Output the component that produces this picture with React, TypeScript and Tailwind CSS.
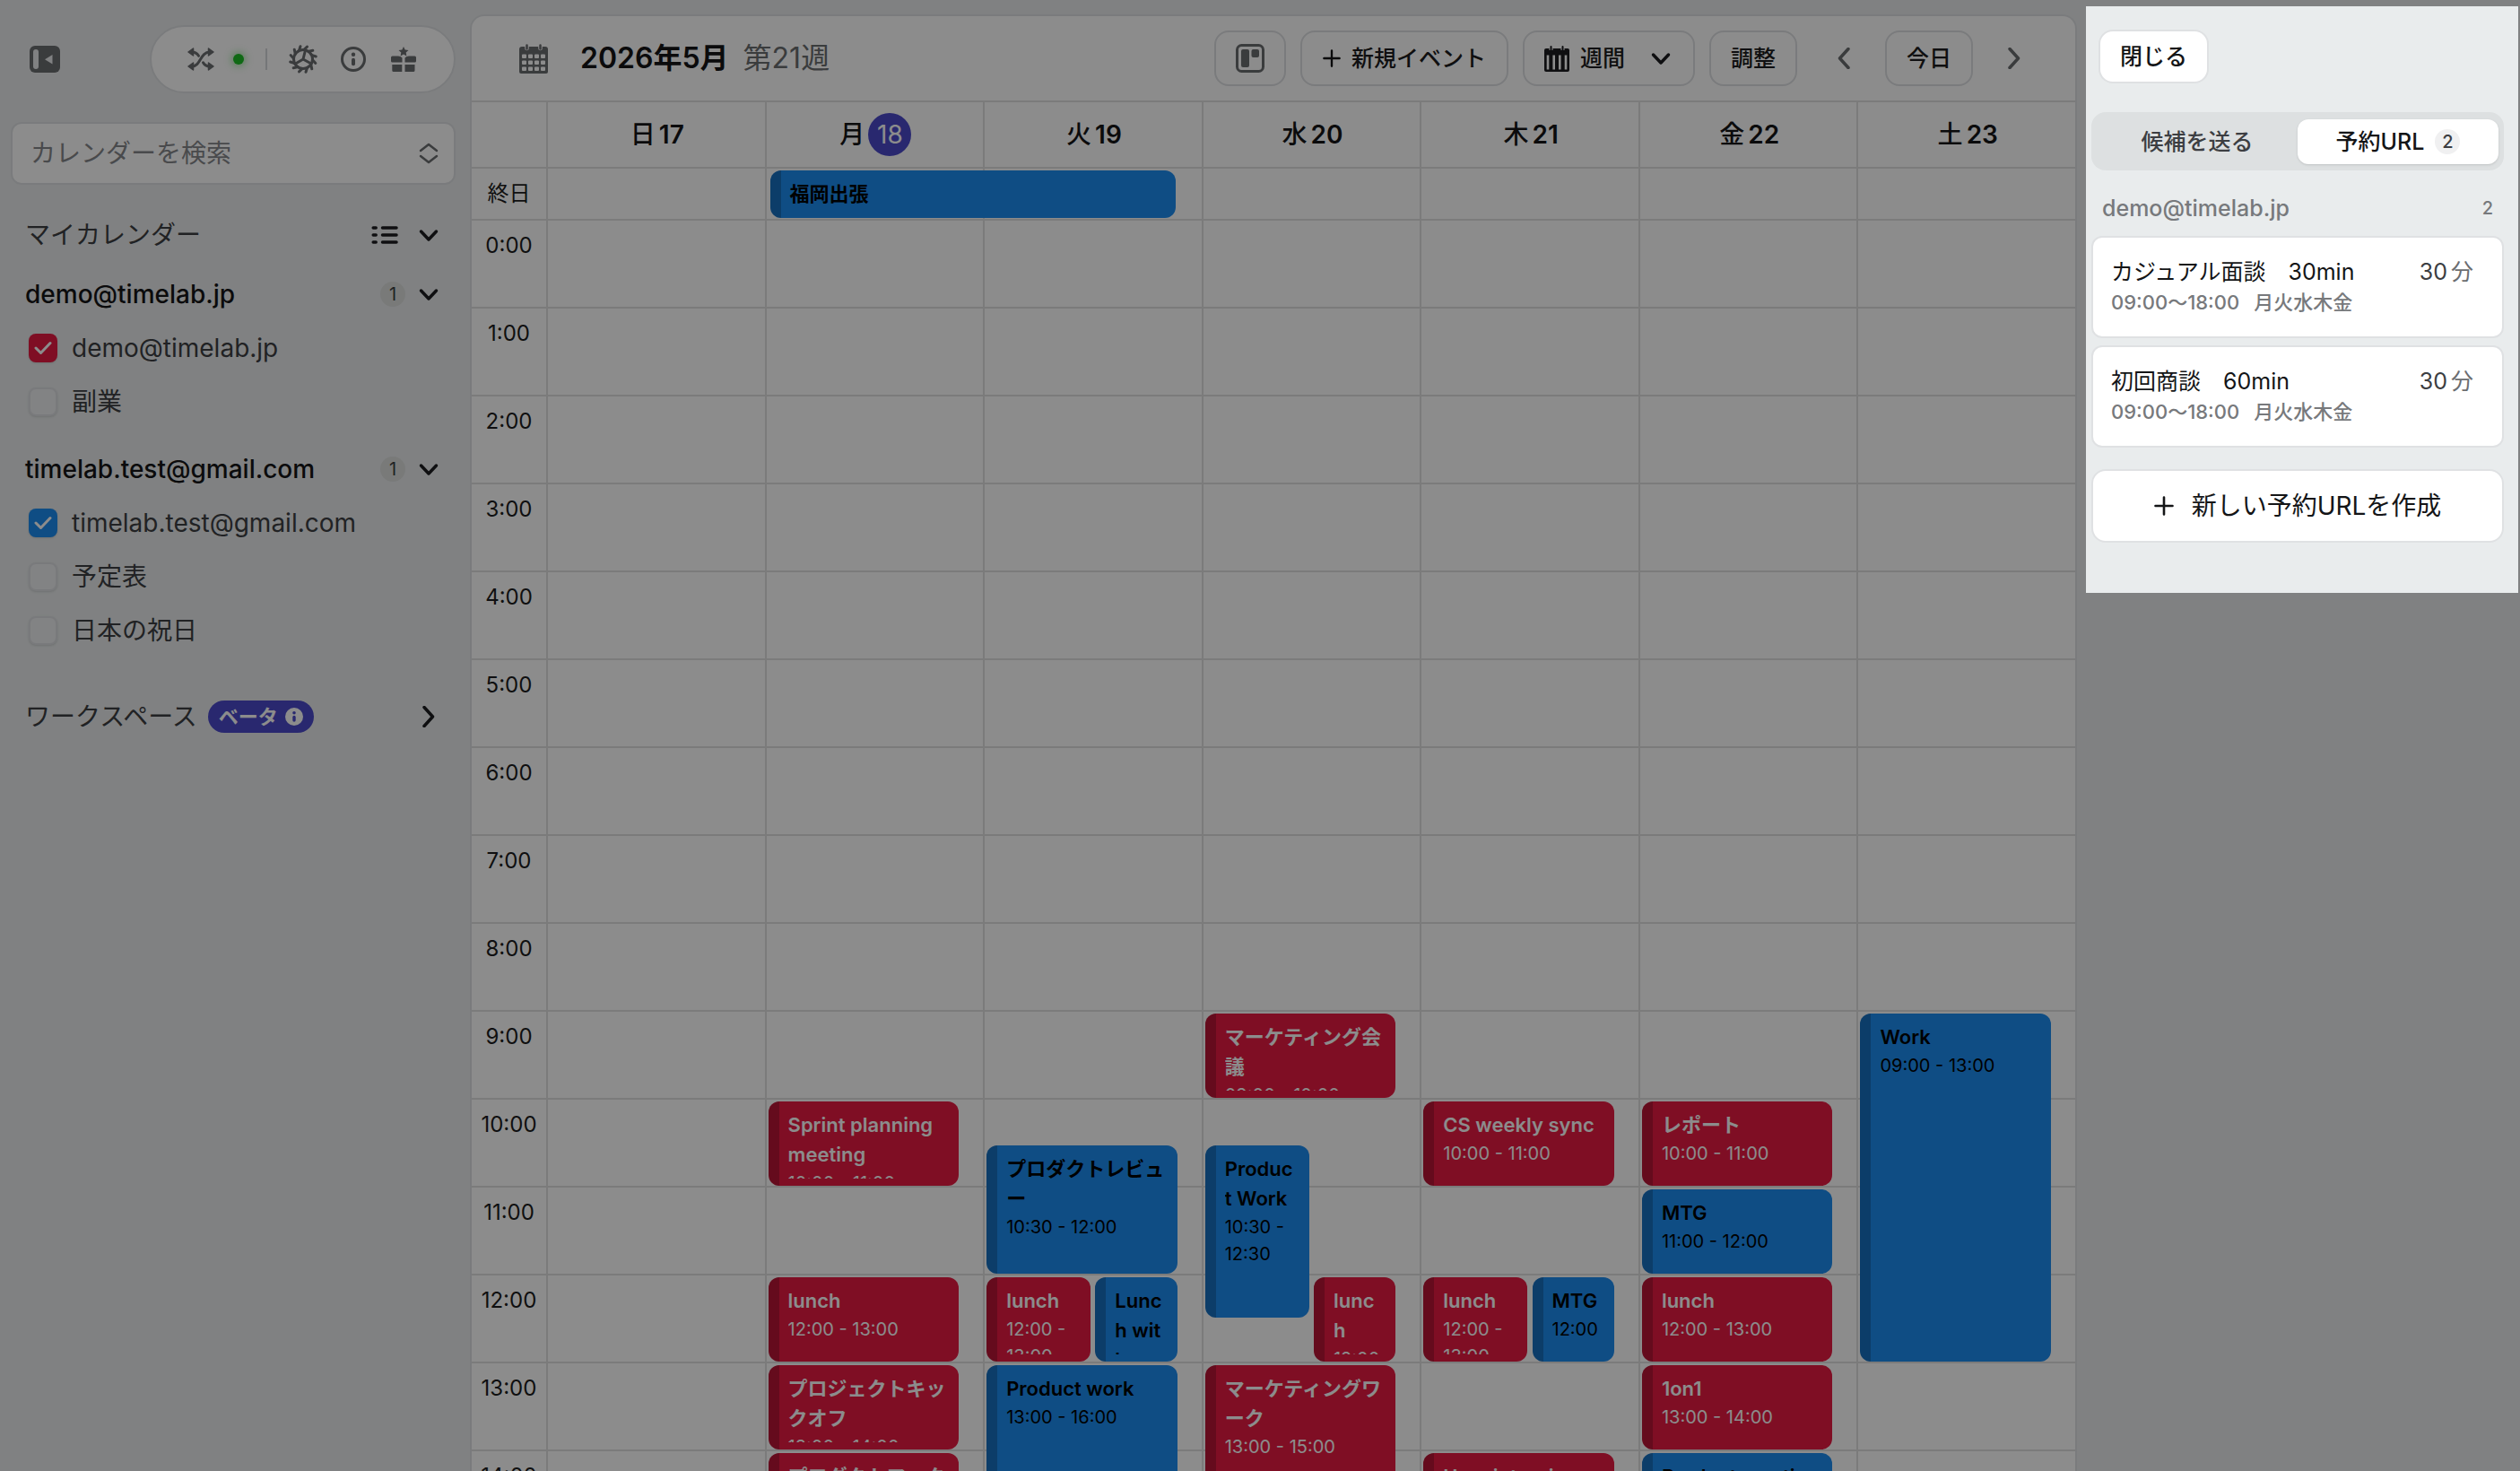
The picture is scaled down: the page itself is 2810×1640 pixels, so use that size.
import { useState } from "react"
import clsx from "clsx"

type CalendarEvent = {
  title: string
  start: number
  end: number
  color: "red" | "blue"
  // which part of the day column the event takes when two overlap
  side?: "left" | "right"
}

type Day = {
  label: string
  date: number
  today?: boolean
  events: CalendarEvent[]
}

const HOUR_HEIGHT = 98

const days: Day[] = [
  { label: "日", date: 17, events: [] },
  {
    label: "月",
    date: 18,
    today: true,
    events: [
      { title: "Sprint planning meeting", start: 10, end: 11, color: "red" },
      { title: "lunch", start: 12, end: 13, color: "red" },
      { title: "プロジェクトキックオフ", start: 13, end: 14, color: "red" },
      { title: "プロダクトワーク", start: 14, end: 15, color: "red" },
    ],
  },
  {
    label: "火",
    date: 19,
    events: [
      { title: "プロダクトレビュー", start: 10.5, end: 12, color: "blue" },
      { title: "lunch", start: 12, end: 13, color: "red", side: "left" },
      { title: "Lunch with", start: 12, end: 13, color: "blue", side: "right" },
      { title: "Product work", start: 13, end: 16, color: "blue" },
    ],
  },
  {
    label: "水",
    date: 20,
    events: [
      { title: "マーケティング会議", start: 9, end: 10, color: "red" },
      { title: "Product Work", start: 10.5, end: 12.5, color: "blue", side: "left" },
      { title: "lunch", start: 12, end: 13, color: "red", side: "right" },
      { title: "マーケティングワーク", start: 13, end: 15, color: "red" },
    ],
  },
  {
    label: "木",
    date: 21,
    events: [
      { title: "CS weekly sync", start: 10, end: 11, color: "red" },
      { title: "lunch", start: 12, end: 13, color: "red", side: "left" },
      { title: "MTG", start: 12, end: 13, color: "blue", side: "right" },
      { title: "User interview", start: 14, end: 15, color: "red" },
    ],
  },
  {
    label: "金",
    date: 22,
    events: [
      { title: "レポート", start: 10, end: 11, color: "red" },
      { title: "MTG", start: 11, end: 12, color: "blue" },
      { title: "lunch", start: 12, end: 13, color: "red" },
      { title: "1on1", start: 13, end: 14, color: "red" },
      { title: "Product meeting", start: 14, end: 15, color: "blue" },
    ],
  },
  {
    label: "土",
    date: 23,
    events: [{ title: "Work", start: 9, end: 13, color: "blue" }],
  },
]

const accounts = [
  {
    name: "demo@timelab.jp",
    calendars: [
      { name: "demo@timelab.jp", checked: true, color: "red" },
      { name: "副業", checked: false, color: "red" },
    ],
  },
  {
    name: "timelab.test@gmail.com",
    calendars: [
      { name: "timelab.test@gmail.com", checked: true, color: "blue" },
      { name: "予定表", checked: false, color: "blue" },
      { name: "日本の祝日", checked: false, color: "blue" },
    ],
  },
]

const bookingUrls = [
  { title: "カジュアル面談　30min", hours: "09:00〜18:00", weekdays: "月火水木金", minutes: 30 },
  { title: "初回商談　60min", hours: "09:00〜18:00", weekdays: "月火水木金", minutes: 30 },
]

const formatTime = (value: number) => {
  const hour = Math.floor(value)
  const minute = Math.round((value - hour) * 60)
  return `${String(hour).padStart(2, "0")}:${String(minute).padStart(2, "0")}`
}

/* Icons */

const SidebarIcon = () => (
  <svg viewBox="0 0 34 30" className="h-[30px] w-[34px]">
    <rect width="34" height="30" rx="6" fill="#6b6d70" />
    <rect x="4" y="4" width="6" height="22" rx="3" fill="#e9eced" />
    <path d="M25.500 10v10.500L17 15.300z" fill="#e9eced" />
  </svg>
)

const ShuffleIcon = () => (
  <svg viewBox="0 0 30 26" className="h-[26px] w-[30px]" fill="none" stroke="#6b6d70" strokeWidth="3" strokeLinecap="round">
    <path d="M5 21c10 0 9-16 20-16" />
    <path d="M5 5c4 0 6 1.800 7.500 4.300M17.500 16.800C19 19.500 21 21 25 21" />
    <g fill="#6b6d70" strokeWidth="1.500" strokeLinejoin="round">
      <path d="M23.500 1v8l5.500-4zM23.500 17v8l5.500-4zM6.500 1v8L1 5zM6.500 17v8L1 21z" />
    </g>
  </svg>
)

const GearIcon = () => (
  <svg viewBox="-16 -16 32 32" className="size-8" fill="none" stroke="#6b6d70" strokeWidth="3">
    <circle r="10.500" />
    {[0, 30, 60, 90, 120, 150, 180, 210, 240, 270, 300, 330].map((deg) => (
      <path key={deg} d="M-1 -11l2.500 -3.500" strokeLinecap="round" transform={`rotate(${deg + 12})`} />
    ))}
    <path d="M0 0L2.500 -10M0 0l9 5M0 0l-8.500 5" />
  </svg>
)

const InfoIcon = () => (
  <svg viewBox="0 0 28 28" className="size-7" fill="none" stroke="#6b6d70">
    <circle cx="14" cy="14" r="12.500" strokeWidth="3" />
    <circle cx="14" cy="8.800" r="2.200" fill="#6b6d70" stroke="none" />
    <rect x="12" y="12.800" width="4" height="8.500" rx="2" fill="#6b6d70" stroke="none" />
  </svg>
)

const GiftIcon = () => (
  <svg viewBox="0 0 28 28" className="size-7" fill="#6b6d70">
    <path d="M14 0l1.700 3.500 3.800.5-2.800 2.600.7 3.800L14 8.600l-3.400 1.800.7-3.800L8.500 4l3.800-.5z" />
    <path d="M1.500 10.500H8c1.500 0 3.500.8 4.500 2v5h-11A1.500 1.500 0 0 1 0 16v-4a1.500 1.500 0 0 1 1.500-1.500zM26.500 10.500H20c-1.500 0-3.500.8-4.500 2v5h11A1.500 1.500 0 0 0 28 16v-4a1.500 1.500 0 0 0-1.500-1.500z" />
    <path d="M1.300 20h11v8h-9.500a1.500 1.500 0 0 1-1.500-1.500zM15.500 20h11v6.500a1.500 1.500 0 0 1-1.500 1.500h-9.500z" />
  </svg>
)

const ListIcon = () => (
  <svg viewBox="0 0 30 22" className="h-[22px] w-[30px]" stroke="#1c1d20" strokeWidth="3.500" strokeLinecap="round">
    <path d="M2.200 3h3M2.200 11h3M2.200 19h3M12.500 3H28M12.500 11H28M12.500 19H28" />
  </svg>
)

const Chevron = ({ direction, className }: { direction: "down" | "left" | "right"; className?: string }) => (
  <svg
    viewBox="0 0 24 24"
    className={clsx("size-6 shrink-0", className)}
    fill="none"
    stroke="currentColor"
    strokeWidth="3.500"
    strokeLinecap="round"
    strokeLinejoin="round"
  >
    {direction === "down" && <path d="M3.500 8L12 17l8.500-9" />}
    {direction === "left" && <path d="M17 1.500L7.500 12 17 22.500" />}
    {direction === "right" && <path d="M7 1.500L16.500 12 7 22.500" />}
  </svg>
)

const SortIcon = () => (
  <svg viewBox="0 0 22 24" className="h-6 w-[22px] shrink-0" fill="none" stroke="#6b6d70" strokeWidth="2.500" strokeLinecap="round" strokeLinejoin="round">
    <path d="M2 9l9-7 9 7M2 15l9 7 9-7" />
  </svg>
)

const MonthIcon = () => (
  <svg viewBox="0 0 32 33" className="h-[33px] w-8">
    <path d="M3 3h26a3 3 0 0 1 3 3v25a2 2 0 0 1-2 2H2a2 2 0 0 1-2-2V6a3 3 0 0 1 3-3z" fill="#6b6d70" />
    <g stroke="#fff" strokeWidth="4.500" strokeLinecap="round">
      <path d="M8.500 1v4M23.500 1v4" />
    </g>
    <g stroke="#6b6d70" strokeWidth="2.500" strokeLinecap="round">
      <path d="M8.500 1.500v4M23.500 1.500v4" />
    </g>
    <g fill="#fff">
      {[11.5, 18.5, 25.5].map((y) =>
        [3, 10, 17, 24].map((x) => <rect key={`${x}-${y}`} x={x} y={y} width="5" height="4.500" rx="1" />)
      )}
    </g>
  </svg>
)

const WeekIcon = () => (
  <svg viewBox="0 0 28 29" className="h-[29px] w-7 shrink-0">
    <path d="M2 3h24a2 2 0 0 1 2 2v22a2 2 0 0 1-2 2H2a2 2 0 0 1-2-2V5a2 2 0 0 1 2-2z" fill="#1c1d20" />
    <path d="M7.500 1v4M20.500 1v4" stroke="#fff" strokeWidth="4" />
    <path d="M7.500 1v4M20.500 1v4" stroke="#1c1d20" strokeWidth="2" strokeLinecap="round" />
    <path d="M4 10.500v16M10.700 10.500v16M17.300 10.500v16M24 10.500v16" stroke="#fff" strokeWidth="2.600" />
  </svg>
)

const BoardIcon = () => (
  <svg viewBox="0 0 32 32" className="size-8" fill="none">
    <rect x="1.500" y="1.500" width="29" height="29" rx="5" stroke="#6b6d70" strokeWidth="3" />
    <rect x="6" y="6" width="9" height="20" rx="2" fill="#6b6d70" />
    <rect x="17.500" y="6" width="8.500" height="9" rx="2" fill="#6b6d70" />
  </svg>
)

const PlusIcon = ({ className }: { className?: string }) => (
  <svg viewBox="0 0 22 22" className={clsx("shrink-0", className)} stroke="#141517" strokeWidth="2.600" strokeLinecap="round">
    <path d="M11 1.500v19M1.500 11h19" />
  </svg>
)

/* Left sidebar */

const CalendarCheckbox = ({ name, checked, color }: { name: string; checked: boolean; color: string }) => {
  const [on, setOn] = useState(checked)

  return (
    <label className="flex h-[60px] items-center gap-4 pl-4 text-[28px] leading-8 text-[#3c3e42]">
      <span className="relative flex size-8 shrink-0 items-center justify-center">
        <input
          type="checkbox"
          checked={on}
          onChange={() => setOn(!on)}
          className={clsx(
            "size-8 appearance-none rounded-lg shadow",
            on && color === "red" && "bg-[#e71b43]",
            on && color === "blue" && "bg-[#1d8cf0]",
            !on && "border-2 border-[#dddfe2] bg-[#edeef1]"
          )}
        />
        {on && (
          <svg
            viewBox="0 0 20 16"
            className="pointer-events-none absolute h-4 w-5"
            fill="none"
            stroke="#fff"
            strokeWidth="3"
            strokeLinecap="round"
            strokeLinejoin="round"
          >
            <path d="M2 8l5.500 5.500L18 2.500" />
          </svg>
        )}
      </span>
      {name}
    </label>
  )
}

const Sidebar = () => (
  <aside className="flex w-[524px] shrink-0 flex-col pr-4 pl-3 pt-7">
    <div className="flex items-center justify-between pl-[21px]">
      <button aria-label="サイドバー">
        <SidebarIcon />
      </button>
      <div className="flex h-[76px] w-[341px] items-center rounded-full border-2 border-[#dfe1e3] bg-white pl-10">
        <button aria-label="同期">
          <ShuffleIcon />
        </button>
        <span className="ml-[21px] size-3 rounded-full bg-[#1dbf26] shadow-[0_0_8px_2px_rgba(29,191,38,0.4)]" />
        <span className="ml-6 h-6 w-0.5 bg-[#d5d7da]" />
        <button aria-label="設定" className="ml-6">
          <GearIcon />
        </button>
        <button aria-label="情報" className="ml-[26px]">
          <InfoIcon />
        </button>
        <button aria-label="お知らせ" className="ml-7">
          <GiftIcon />
        </button>
      </div>
    </div>

    <div className="mt-8 flex h-[70px] items-center rounded-xl border-2 border-[#dfe1e3] bg-white pr-[17px] pl-5">
      <input
        type="text"
        aria-label="カレンダーを検索"
        placeholder="カレンダーを検索"
        className="min-w-0 flex-1 text-[28px] leading-9 outline-none placeholder:text-[#86888b]"
      />
      <SortIcon />
    </div>

    <div className="mt-8 flex h-12 items-center pr-[18px] pl-4">
      <h2 className="flex-1 text-[28px] leading-8 text-[#3c3e42]">マイカレンダー</h2>
      <button aria-label="リスト" className="mr-[22px]">
        <ListIcon />
      </button>
      <button aria-label="マイカレンダー">
        <Chevron direction="down" />
      </button>
    </div>

    <div className="mt-3 flex flex-col gap-[15px]">
      {accounts.map((account) => (
        <section key={account.name} className="pl-1">
          <div className="flex h-[60px] items-center pr-[18px] pl-3">
            <h3 className="flex-1 text-[28px] font-medium leading-8 text-[#141517]">{account.name}</h3>
            <span className="mr-[14px] flex size-7 items-center justify-center rounded-full bg-[#dcdedd] text-xl leading-6 text-[#3c3e42]">
              1
            </span>
            <button aria-label={account.name}>
              <Chevron direction="down" />
            </button>
          </div>
          {account.calendars.map((calendar) => (
            <CalendarCheckbox key={calendar.name} {...calendar} />
          ))}
        </section>
      ))}
    </div>

    <div className="mt-[42px] flex h-12 items-center pr-[18px] pl-4">
      <h2 className="text-[28px] leading-8 text-[#3c3e42]">ワークスペース</h2>
      <span className="ml-3 flex h-9 items-center gap-2 rounded-full bg-[#4b4acb] px-3 text-[22px] font-bold leading-6 text-white">
        ベータ
        <svg viewBox="0 0 20 20" className="size-5">
          <circle cx="10" cy="10" r="10" fill="#fff" />
          <circle cx="10" cy="5.800" r="1.800" fill="#4b4acb" />
          <rect x="8.300" y="8.800" width="3.400" height="7" rx="1.700" fill="#4b4acb" />
        </svg>
      </span>
      <button aria-label="ワークスペース" className="ml-auto">
        <Chevron direction="right" />
      </button>
    </div>
  </aside>
)

/* Week calendar */

const toolbarButton =
  "flex h-[62px] items-center rounded-2xl border-2 border-[#dfe1e3] text-[25px] leading-8 font-medium text-[#1c1d20]"

const Toolbar = () => (
  <header className="flex h-24 shrink-0 items-center border-b-2 border-[#e0e1e1] pr-[56px] pl-[53px]">
    <MonthIcon />
    <h1 className="ml-9 text-[32px] font-semibold leading-10 text-[#141517]">2026年5月</h1>
    <span className="ml-4 flex-1 text-[32px] leading-10 text-[#6b6d70]">第21週</span>

    <div className="flex items-center gap-4">
      <button aria-label="ボード" className={clsx(toolbarButton, "px-[22px]")}>
        <BoardIcon />
      </button>
      <button className={clsx(toolbarButton, "gap-3 px-[23px]")}>
        <PlusIcon className="size-5" />
        新規イベント
      </button>
      <label className={clsx(toolbarButton, "pr-6 pl-[22px]")}>
        <WeekIcon />
        <select aria-label="表示" className="mx-3 w-[66px] appearance-none outline-none">
          <option>週間</option>
        </select>
        <Chevron direction="down" />
      </label>
      <button className={clsx(toolbarButton, "px-[22px]")}>調整</button>
    </div>
    <button aria-label="前の週" className="ml-10 text-[#6b6d70]">
      <Chevron direction="left" />
    </button>
    <button className={clsx(toolbarButton, "mx-[34px] px-[22px]")}>今日</button>
    <button aria-label="次の週" className="text-[#6b6d70]">
      <Chevron direction="right" />
    </button>
  </header>
)

const EventCard = ({ event }: { event: CalendarEvent }) => (
  <button
    className={clsx(
      "absolute flex flex-col items-start overflow-hidden rounded-xl pt-2.5 pr-3 pb-2 pl-[22px] text-left",
      event.color === "red" ? "bg-[#e71b43] text-white" : "bg-[#1d8cf0] text-black",
      !event.side && "left-0.5 right-[27px]",
      event.side === "left" && "left-0.5 w-[48%]",
      event.side === "right" && "left-[51%] right-[27px]"
    )}
    style={{
      top: event.start * HOUR_HEIGHT + 2,
      height: (event.end - event.start) * HOUR_HEIGHT - 4,
    }}
  >
    <span className="absolute inset-y-0 left-0 w-3 bg-black/20" />
    <span className="block max-h-full w-full overflow-hidden">
      <span className="block text-[22px] font-semibold leading-[33px] break-all">{event.title}</span>
      <span className="block text-xl leading-[30px]">
        {formatTime(event.start)} - {formatTime(event.end)}
      </span>
    </span>
  </button>
)

const WeekCalendar = () => (
  <main className="mt-4 flex min-w-0 flex-1 flex-col overflow-hidden rounded-t-2xl border-2 border-b-0 border-[#dfe1e3] bg-white">
    <Toolbar />

    <div className="flex h-[74px] shrink-0 border-b-2 border-[#e0e1e1]">
      <div className="w-[83px] shrink-0" />
      {days.map((day) => (
        <div
          key={day.date}
          className="flex flex-1 items-center justify-center gap-1 border-l-2 border-[#e0e1e1] pl-0.5 text-[28px] leading-8 text-[#141517]"
        >
          <span className="font-medium">{day.label}</span>
          {day.today ? (
            <span className="flex size-12 items-center justify-center rounded-full bg-[#4b4acb] text-white">{day.date}</span>
          ) : (
            <span className="font-semibold">{day.date}</span>
          )}
        </div>
      ))}
    </div>

    <div className="flex h-[58px] shrink-0 border-b-2 border-[#e0e1e1]">
      <div className="flex w-[83px] shrink-0 items-center justify-center text-2xl text-[#1c1d20]">終日</div>
      {days.map((day) => (
        <div key={day.date} className="relative flex-1 border-l-2 border-[#e0e1e1]">
          {day.today && (
            <button className="absolute top-0.5 left-1 z-1 flex h-[53px] w-[calc(200%-31px)] items-center overflow-hidden rounded-xl bg-[#1d8cf0] pl-[22px] text-[22px] font-semibold text-black">
              <span className="absolute inset-y-0 left-0 w-3 bg-black/20" />
              福岡出張
            </button>
          )}
        </div>
      ))}
    </div>

    <div className="min-h-0 flex-1 overflow-hidden">
      <div className="flex">
        <div className="w-[83px] shrink-0">
          {Array.from({ length: 24 }, (_, hour) => (
            <div key={hour} className="h-[98px] border-b-2 border-[#e0e1e1] pt-3 text-center text-2xl leading-8 text-[#1c1d20]">
              {hour}:00
            </div>
          ))}
        </div>
        {days.map((day) => (
          <div key={day.date} className="relative flex-1 border-l-2 border-[#e0e1e1]">
            {Array.from({ length: 24 }, (_, hour) => (
              <div key={hour} className="h-[98px] border-b-2 border-[#e0e1e1]" />
            ))}
            {day.events.map((event) => (
              <EventCard key={`${event.title}-${event.start}`} event={event} />
            ))}
          </div>
        ))}
      </div>
    </div>
  </main>
)

/* Booking panel, everything around it is dimmed */

const BookingPanel = () => {
  const [tab, setTab] = useState<"candidates" | "urls">("urls")

  return (
    <aside className="w-[494px] shrink-0 pt-[7px] pr-0.5 pl-2.5">
      <div className="relative z-10 bg-[#e9eced] px-1.5 pt-[26px] pb-14 shadow-[0_0_0_3000px_rgba(0,0,0,0.45)]">
        <button className="ml-2 flex h-[60px] items-center rounded-2xl border-2 border-[#dfe1e3] bg-white px-[22px] text-[25px] leading-8 font-medium text-[#141517]">
          閉じる
        </button>

        <div className="mt-8 mr-2.5 flex h-[65px] items-center rounded-2xl bg-[#dde0e1] p-1.5 text-[25px] leading-8 font-medium">
          <button
            onClick={() => setTab("candidates")}
            className={clsx("h-[50px] flex-1 rounded-xl", tab === "candidates" ? "bg-white text-[#141517] shadow" : "text-[#3c3e42]")}
          >
            候補を送る
          </button>
          <button
            onClick={() => setTab("urls")}
            className={clsx(
              "flex h-[50px] flex-1 items-center justify-center gap-3 rounded-xl",
              tab === "urls" ? "bg-white text-[#141517] shadow" : "text-[#3c3e42]"
            )}
          >
            予約URL
            <span className="flex size-7 items-center justify-center rounded-full bg-[#f0f0f1] text-xl leading-6 text-[#3c3e42]">2</span>
          </button>
        </div>

        <div className="mt-6 mr-2.5 flex items-center justify-between pr-3 pl-3 font-medium text-[#77797c]">
          <span className="text-[25px] leading-9">demo@timelab.jp</span>
          <span className="text-xl leading-9">2</span>
        </div>

        <ul className="mt-[13px] mr-2.5 flex flex-col gap-2">
          {bookingUrls.map((url) => (
            <li key={url.title}>
              <button className="flex h-[114px] w-full items-start justify-between rounded-xl border-2 border-[#dfe1e3] bg-white pt-5 pr-8 pl-5 text-left">
                <span>
                  <span className="block text-[25px] leading-9 text-[#141517]">{url.title}</span>
                  <span className="flex gap-4 text-[22px] leading-8 font-medium text-[#77797c]">
                    <span>{url.hours}</span>
                    <span>{url.weekdays}</span>
                  </span>
                </span>
                <span className="flex gap-1 text-[25px] leading-9 text-[#3c3e42]">
                  {url.minutes}
                  <span className="text-[#6b6d70]">分</span>
                </span>
              </button>
            </li>
          ))}
        </ul>

        <div className="mt-6 mr-2.5">
          <button className="flex h-[82px] w-full items-center justify-center gap-5 rounded-2xl border-2 border-[#dfe1e3] bg-white text-[28px] leading-9 text-[#141517]">
            <PlusIcon className="size-[22px]" />
            新しい予約URLを作成
          </button>
        </div>
      </div>
    </aside>
  )
}

const App = () => (
  <div
    lang="ja"
    className="flex h-screen overflow-hidden bg-[#e9eced] font-[Inter,'Noto_Sans_CJK_JP',sans-serif] text-[#1c1d20]"
  >
    <Sidebar />
    <WeekCalendar />
    <BookingPanel />
  </div>
)

export default App
